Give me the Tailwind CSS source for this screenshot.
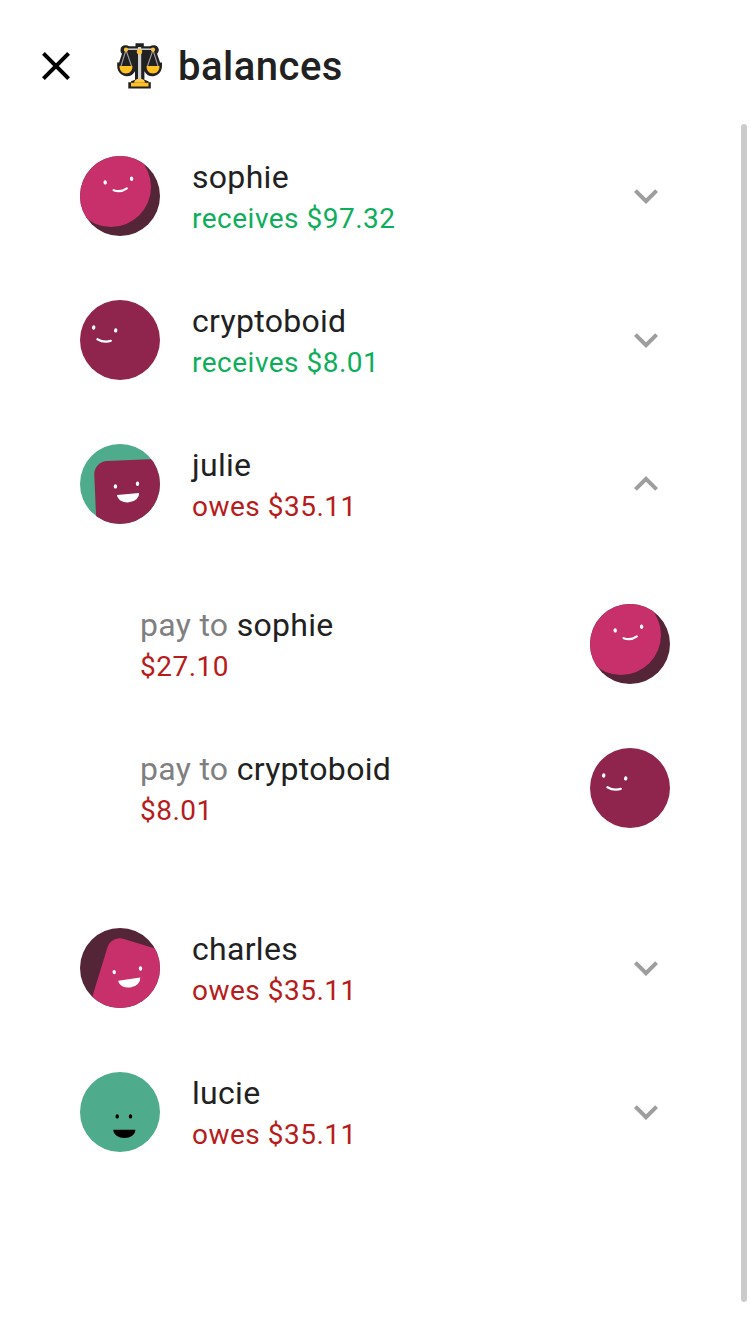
<!DOCTYPE html>
<html lang="en">
<head>
<meta charset="utf-8">
<title>balances</title>
<script src="https://cdn.jsdelivr.net/npm/@tailwindcss/browser@4"></script>
</head>
<body class="bg-white">
<svg class="hidden">
  <defs>
    <symbol id="sophie" viewBox="0 0 80 80"><path fill="#542437" d="M0 0h80v80H0z"/><circle cx="31" cy="31" r="40" fill="#c8306b"/><g fill="#fff"><ellipse cx="25.2" cy="26.4" rx="1.7" ry="2.2" transform="rotate(-8 25.2 26.4)"/><ellipse cx="51.6" cy="22.7" rx="1.7" ry="2.2" transform="rotate(-8 51.6 22.7)"/></g><path d="M33.6 34.2q7.2 2.5 13.2-1.9" fill="none" stroke="#fff" stroke-width="2.2" stroke-linecap="round"/></symbol>
    <symbol id="cryptoboid" viewBox="0 0 80 80"><path fill="#8f254c" d="M0 0h80v80H0z"/><g fill="#fff"><ellipse cx="13.7" cy="27.5" rx="1.7" ry="2.2" transform="rotate(8 13.7 27.5)"/><ellipse cx="35.7" cy="30.4" rx="1.7" ry="2.2" transform="rotate(8 35.7 30.4)"/></g><path d="M17.4 39.2q6.2 3.7 13.4 1.7" fill="none" stroke="#fff" stroke-width="2.2" stroke-linecap="round"/></symbol>
    <symbol id="julie" viewBox="0 0 80 80"><path fill="#4eab8b" d="M0 0h80v80H0z"/><rect x="13.7" y="17.6" width="80" height="80" rx="13.3" transform="rotate(-2.5 13.7 17.6)" fill="#8f254c"/><g fill="#fff"><ellipse cx="35.4" cy="42.4" rx="1.7" ry="2.2"/><ellipse cx="57.5" cy="39.8" rx="1.7" ry="2.2"/><path d="M37 51.1a11.1 8.3 -5 0 0 22.1-2.1z"/></g></symbol>
    <symbol id="charles" viewBox="0 0 80 80"><path fill="#542437" d="M0 0h80v80H0z"/><rect x="31.2" y="7" width="100" height="100" rx="13.3" transform="rotate(17 31.2 7)" fill="#c8306b"/><g fill="#fff"><ellipse cx="34.2" cy="44.1" rx="1.7" ry="2.2" transform="rotate(-8 34.2 44.1)"/><ellipse cx="60.5" cy="40.5" rx="1.7" ry="2.2" transform="rotate(-8 60.5 40.5)"/><path d="M38.2 52.8a11.1 8.3 -8 0 0 22-3.2z"/></g></symbol>
    <symbol id="lucie" viewBox="0 0 80 80"><path fill="#4eab8b" d="M0 0h80v80H0z"/><ellipse cx="37.2" cy="44.4" rx="1.7" ry="2.2"/><ellipse cx="50.5" cy="44.4" rx="1.7" ry="2.2"/><path d="M33.3 57.8a11.1 8.3 0 0 0 22.2 0z"/></symbol>
    <symbol id="chevron" viewBox="0 0 24 24"><path d="M7.41 8.59 12 13.17l4.59-4.58L18 10l-6 6-6-6 1.41-1.41z"/></symbol>
  </defs>
</svg>
<div class="relative w-[750px] h-[1334px] overflow-hidden bg-white text-[#212121] font-[Roboto,sans-serif]">
  <header class="flex items-center h-[124px] pt-2 pl-8">
    <svg class="size-12" viewBox="0 0 24 24"><path d="M19 6.41 17.59 5 12 10.59 6.41 5 5 6.41 10.59 12 5 17.59 6.41 19 12 13.41 17.59 19 19 17.59 13.41 12z"/></svg>
    <svg class="ml-9 w-[46px] h-12" viewBox="116 42 46 48">
      <path fill="#212121" d="M135.5 43.2h8.3v3.1H150q2-1.5 5-1 3.5 1 3.8 4.5c0 2-1 3-1.7 4l3 8.7h1.9v3.5c0 5-3.7 10.2-9.5 10.2-4 0-6.5-2-8.1-5v8.5l4.1 1.6v.9h2.3v6.4h-22.5v-6.4h2.7v-.9l4-1.6v-8.5c-1.6 3-4.3 5-8 5-6 0-9.8-5-9.8-10.2v-3.5h1.9l2.9-8.7c-1-1-1.6-2-1.5-4 0-3 2-4.6 5-4.6 1.5 0 2.8.5 3.8 1.1h6.2z"/>
      <path fill="none" stroke="#9e9e9e" stroke-width="1.1" d="m126 50-5 16m5-16 5.5 16M153 50l-5.5 16m5.5-16 5 16"/>
      <path stroke="#d0d0d0" stroke-width="1.5" d="M126 49.2h27"/>
      <path fill="#d0d0d0" d="M138 47h3.2v33H138z"/>
      <path fill="#ffc021" d="M119.5 65.9h13c0 4.8-2.8 7.5-6.5 7.5s-6.5-2.7-6.5-7.5zm27 0h13c0 4.8-2.8 7.5-6.5 7.5s-6.5-2.7-6.5-7.5zM131 82.7h17.5v3.7H131z"/>
      <path fill="#ffca4a" d="M134.2 82.7c0-2.5 2-4 5.4-4s5.4 1.5 5.4 4z"/>
      <circle cx="126" cy="49.7" r="2.1" fill="#ffc33b"/><circle cx="153" cy="49.7" r="2.1" fill="#ffc33b"/><circle cx="139.5" cy="51.8" r="2.7" fill="#ffc33b"/>
    </svg>
    <h1 class="ml-4 mt-0.5 text-[40px] leading-[64px] font-medium tracking-[0.5px]">balances</h1>
  </header>
  <main>
    <section class="flex items-center h-36 pl-20 pr-20">
      <svg class="size-20 rounded-full"><use href="#sophie"/></svg>
      <div class="ml-8 flex-1"><p class="text-[32px] leading-[46px] tracking-[0.3px]">sophie</p><p class="text-[28px] leading-[38px] tracking-[0.5px] text-[#0cae5b]">receives $97.32</p></div>
      <svg class="size-12 fill-[#9e9e9e]"><use href="#chevron"/></svg>
    </section>
    <section class="flex items-center h-36 pl-20 pr-20">
      <svg class="size-20 rounded-full"><use href="#cryptoboid"/></svg>
      <div class="ml-8 flex-1"><p class="text-[32px] leading-[46px] tracking-[0.3px]">cryptoboid</p><p class="text-[28px] leading-[38px] tracking-[0.5px] text-[#0cae5b]">receives $8.01</p></div>
      <svg class="size-12 fill-[#9e9e9e]"><use href="#chevron"/></svg>
    </section>
    <section class="flex items-center h-36 pl-20 pr-20">
      <svg class="size-20 rounded-full"><use href="#julie"/></svg>
      <div class="ml-8 flex-1"><p class="text-[32px] leading-[46px] tracking-[0.3px]">julie</p><p class="text-[28px] leading-[38px] tracking-[0.5px] text-[#b71c1c]">owes $35.11</p></div>
      <svg class="size-12 fill-[#9e9e9e] rotate-180"><use href="#chevron"/></svg>
    </section>
    <div class="pt-4 pb-9">
      <section class="flex items-center h-36 pl-[140px] pr-20">
        <div class="flex-1"><p class="text-[32px] leading-[46px] tracking-[0.3px]"><span class="text-[#808080]">pay to </span>sophie</p><p class="text-[28px] leading-[38px] tracking-[0.5px] text-[#b71c1c]">$27.10</p></div>
        <svg class="size-20 rounded-full"><use href="#sophie"/></svg>
      </section>
      <section class="flex items-center h-36 pl-[140px] pr-20">
        <div class="flex-1"><p class="text-[32px] leading-[46px] tracking-[0.3px]"><span class="text-[#808080]">pay to </span>cryptoboid</p><p class="text-[28px] leading-[38px] tracking-[0.5px] text-[#b71c1c]">$8.01</p></div>
        <svg class="size-20 rounded-full"><use href="#cryptoboid"/></svg>
      </section>
    </div>
    <section class="flex items-center h-36 pl-20 pr-20">
      <svg class="size-20 rounded-full"><use href="#charles"/></svg>
      <div class="ml-8 flex-1"><p class="text-[32px] leading-[46px] tracking-[0.3px]">charles</p><p class="text-[28px] leading-[38px] tracking-[0.5px] text-[#b71c1c]">owes $35.11</p></div>
      <svg class="size-12 fill-[#9e9e9e]"><use href="#chevron"/></svg>
    </section>
    <section class="flex items-center h-36 pl-20 pr-20">
      <svg class="size-20 rounded-full"><use href="#lucie"/></svg>
      <div class="ml-8 flex-1"><p class="text-[32px] leading-[46px] tracking-[0.3px]">lucie</p><p class="text-[28px] leading-[38px] tracking-[0.5px] text-[#b71c1c]">owes $35.11</p></div>
      <svg class="size-12 fill-[#9e9e9e]"><use href="#chevron"/></svg>
    </section>
  </main>
  <div class="absolute right-[3px] top-[124px] h-[1178px] w-1.5 rounded-full bg-[#cbcbcb]"></div>
</div>
</body>
</html>
